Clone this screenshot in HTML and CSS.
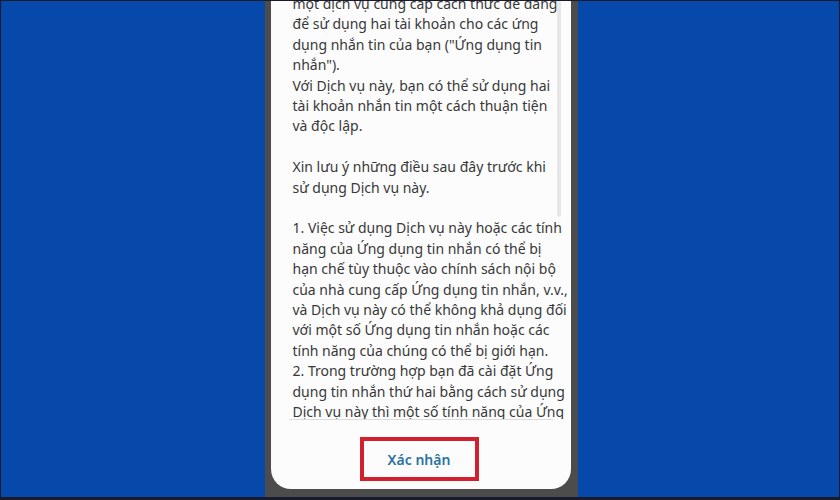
FILE: index.html
```html
<!DOCTYPE html>
<html lang="vi">
<head>
<meta charset="utf-8">
<title>Xác nhận</title>
<link rel="stylesheet" href="styles.css">
</head>
<body>
<div class="frame">
  <div class="phone">
    <div class="card">
      <div class="scroll">
        <div class="content">
          <p>một dịch vụ cung cấp cách thức dễ dàng<br>để sử dụng hai tài khoản cho các ứng<br>dụng nhắn tin của bạn ("Ứng dụng tin<br>nhắn").<br>Với Dịch vụ này, bạn có thể sử dụng hai<br>tài khoản nhắn tin một cách thuận tiện<br>và độc lập.</p>
          <p>Xin lưu ý những điều sau đây trước khi<br>sử dụng Dịch vụ này.</p>
          <p>1. Việc sử dụng Dịch vụ này hoặc các tính<br>năng của Ứng dụng tin nhắn có thể bị<br>hạn chế tùy thuộc vào chính sách nội bộ<br>của nhà cung cấp Ứng dụng tin nhắn, v.v.,<br>và Dịch vụ này có thể không khả dụng đối<br>với một số Ứng dụng tin nhắn hoặc các<br>tính năng của chúng có thể bị giới hạn.<br>2. Trong trường hợp bạn đã cài đặt Ứng<br>dụng tin nhắn thứ hai bằng cách sử dụng<br>Dịch vụ này thì một số tính năng của Ứng</p>
        </div>
        <div class="scrollbar"></div>
      </div>
      <div class="divider"></div>
      <div class="footer">
        <div class="confirm">Xác nhận</div>
      </div>
    </div>
  </div>
</div>
</body>
</html>
```

FILE: styles.css
```css
html, body {
  margin: 0;
  padding: 0;
}
body {
  width: 840px;
  height: 500px;
  overflow: hidden;
  background: #171b2b;
}
.frame {
  box-sizing: border-box;
  width: 838px;
  height: 496px;
  margin: 1px 1px 0 1px;
  background: #0649ab;
  display: flex;
  justify-content: center;
}
.phone {
  box-sizing: border-box;
  width: 313px;
  height: 496px;
  margin-left: 2px;
  padding: 0 7px 8px 6px;
  background: #4c4c4c;
}
.card {
  height: 100%;
  background: #fcfcfc;
  border-radius: 0 0 20px 20px;
  display: flex;
  flex-direction: column;
}
.scroll {
  position: relative;
  height: 418px;
  overflow: hidden;
}
.content {
  margin-top: -7px;
  padding-left: 22px;
  font-family: "Noto Sans", sans-serif;
  font-size: 14px;
  line-height: 20.4px;
  color: #383838;
  white-space: nowrap;
}
.content p {
  margin: 0 0 20.4px 0;
}
.scrollbar {
  position: absolute;
  left: 286px;
  top: 0;
  width: 4px;
  height: 216px;
  border-radius: 2px;
  background: #e6e6e6;
}
.divider {
  height: 1px;
  margin: 0 18px;
  background: #dcdcdc;
}
.footer {
  display: flex;
  justify-content: center;
  padding-top: 17px;
  padding-right: 3px;
}
.confirm {
  box-sizing: border-box;
  width: 119px;
  height: 44px;
  border: 4px solid #d3202e;
  display: flex;
  align-items: center;
  justify-content: center;
  font-family: "Noto Sans", sans-serif;
  font-size: 14px;
  font-weight: 600;
  color: #2a72a2;
}
```
